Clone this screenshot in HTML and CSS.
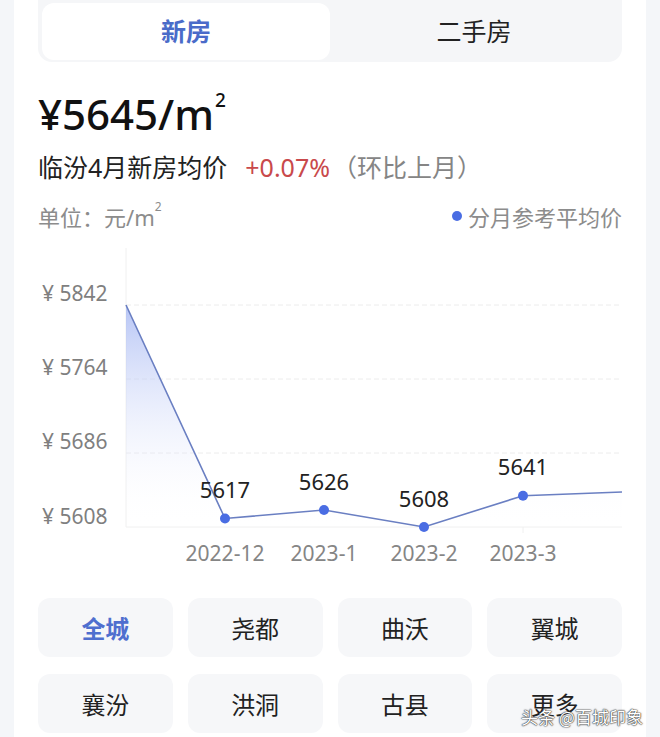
FILE: index.html
```html
<!doctype html>
<html>
<head>
    <meta charset="utf-8">
    <link rel="stylesheet" href="styles.css">
</head>
<body>

<div class="card">

    <div class="tabs">
        <div class="tab tab-active">新房</div>
        <div class="tab">二手房</div>
    </div>

    <div class="price">¥5645/m<sup>2</sup></div>

    <div class="subline">
        临汾4月新房均价<span class="rise">+0.07%</span><span class="note">（环比上月）</span>
    </div>

    <div class="legend-row">
        <div class="unit">单位：元/m<sup>2</sup></div>
        <div class="legend"><span class="legend-dot"></span>分月参考平均价</div>
    </div>

    <svg class="chart" width="584" height="345" viewBox="0 0 584 345">
        <defs>
            <linearGradient id="areaFill" x1="0" y1="0" x2="0" y2="1" gradientUnits="objectBoundingBox">
                <stop offset="0" stop-color="#9fb2f2" stop-opacity="0.75"/>
                <stop offset="1" stop-color="#ffffff" stop-opacity="0"/>
            </linearGradient>
        </defs>

        <!-- grid -->
        <line class="axis" x1="88" y1="18" x2="88" y2="297"/>
        <line class="grid" x1="88" y1="75" x2="584" y2="75"/>
        <line class="grid" x1="88" y1="149" x2="584" y2="149"/>
        <line class="grid" x1="88" y1="223" x2="584" y2="223"/>
        <line class="axis" x1="88" y1="297" x2="584" y2="297"/>
        <line class="axis" x1="485" y1="297" x2="485" y2="303"/>

        <!-- y labels -->
        <text class="ylabel" x="4" y="71">¥ 5842</text>
        <text class="ylabel" x="4" y="145">¥ 5764</text>
        <text class="ylabel" x="4" y="219">¥ 5686</text>
        <text class="ylabel" x="4" y="294">¥ 5608</text>

        <!-- series -->
        <path class="area" d="M88 75 L187 288.5 L286 280 L386 297 L485 265.7 L584 262 L584 297 L88 297 Z"/>
        <polyline class="line" points="88,75 187,288.5 286,280 386,297 485,265.7 584,262"/>

        <circle class="dot" cx="187" cy="288.5" r="5"/>
        <circle class="dot" cx="286" cy="280" r="5"/>
        <circle class="dot" cx="386" cy="297" r="5"/>
        <circle class="dot" cx="485" cy="265.7" r="5"/>

        <text class="value" x="187" y="268">5617</text>
        <text class="value" x="286" y="260">5626</text>
        <text class="value" x="386" y="277">5608</text>
        <text class="value" x="485" y="245">5641</text>

        <!-- x labels -->
        <text class="xlabel" x="187" y="331">2022-12</text>
        <text class="xlabel" x="286" y="331">2023-1</text>
        <text class="xlabel" x="386" y="331">2023-2</text>
        <text class="xlabel" x="485" y="331">2023-3</text>
    </svg>

    <div class="areas">
        <div class="area-btn area-active">全城</div>
        <div class="area-btn">尧都</div>
        <div class="area-btn">曲沃</div>
        <div class="area-btn">翼城</div>
        <div class="area-btn">襄汾</div>
        <div class="area-btn">洪洞</div>
        <div class="area-btn">古县</div>
        <div class="area-btn">更多</div>
    </div>

</div>

<div class="watermark">头条 @百城印象</div>

</body>
</html>
```

FILE: styles.css
```css
html,
body {
    width: 100%;
    height: 100%;
    padding: 0;
    margin: 0;
}

body {
    background: #f4f6f9;
    font-family: "Noto Sans", "Noto Sans CJK SC", sans-serif;
    color: #222;
    overflow: hidden;
    position: relative;
}

.card {
    margin: 0 14px;
    padding: 0 24px;
    min-height: 100%;
    background: #fff;
}

.tabs {
    display: flex;
    height: 62px;
    padding: 3px 4px 2px;
    box-sizing: border-box;
    background: #f5f6f8;
    border-radius: 0 0 14px 14px;
}

.tab {
    flex: 1;
    display: flex;
    align-items: center;
    justify-content: center;
    padding-bottom: 3px;
    font-size: 25px;
    color: #222;
    border-radius: 12px;
}

.tab-active {
    flex: 0 0 288px;
    background: #fff;
    color: #4a6bc9;
    font-weight: 700;
}

.price {
    margin-top: 26px;
    font-size: 42px;
    line-height: 52px;
    font-weight: 500;
    color: #111;
}

.price sup {
    font-size: 19px;
    vertical-align: top;
    line-height: 24px;
    margin-left: 1px;
}

.subline {
    margin-top: 10px;
    font-size: 25px;
    line-height: 34px;
    color: #222;
}

.rise {
    margin-left: 18px;
    color: #c9494b;
}

.note {
    margin-left: 2px;
    color: #858585;
}

.legend-row {
    display: flex;
    justify-content: space-between;
    align-items: center;
    margin-top: 18px;
    height: 28px;
    font-size: 22px;
    color: #8c8c8c;
}

.unit sup {
    font-size: 12px;
    vertical-align: top;
    line-height: 14px;
}

.legend {
    display: flex;
    align-items: center;
}

.legend-dot {
    width: 10px;
    height: 10px;
    border-radius: 50%;
    background: #4a6de3;
    margin-right: 6px;
}

.chart {
    display: block;
    font-family: "Noto Sans", "Noto Sans CJK SC", sans-serif;
}

.chart .grid {
    stroke: #ececec;
    stroke-width: 1;
    stroke-dasharray: 5 3;
}

.chart .axis {
    stroke: #f0f0f0;
    stroke-width: 1;
}

.chart .area {
    fill: url(#areaFill);
}

.chart .line {
    fill: none;
    stroke: #6a7fc2;
    stroke-width: 1.6;
}

.chart .dot {
    fill: #4a6de3;
}

.chart .ylabel {
    font-size: 21px;
    fill: #7f7f7f;
}

.chart .value {
    font-size: 22px;
    fill: #222;
    text-anchor: middle;
}

.chart .xlabel {
    font-size: 21px;
    fill: #858585;
    text-anchor: middle;
}

.areas {
    display: grid;
    grid-template-columns: repeat(4, 1fr);
    column-gap: 15px;
    row-gap: 17px;
    margin-top: 23px;
}

.area-btn {
    height: 59px;
    display: flex;
    align-items: center;
    justify-content: center;
    background: #f6f7f9;
    border-radius: 12px;
    font-size: 24px;
    color: #222;
}

.area-active {
    color: #4f6fcf;
    font-weight: 700;
}

.watermark {
    position: absolute;
    left: 521px;
    top: 704px;
    font-size: 17px;
    color: #fff;
    font-family: "Noto Sans CJK SC", sans-serif;
    text-shadow: 0 0 1px #333, 0 0 1px #333, 0 0 2px #555;
}
```
